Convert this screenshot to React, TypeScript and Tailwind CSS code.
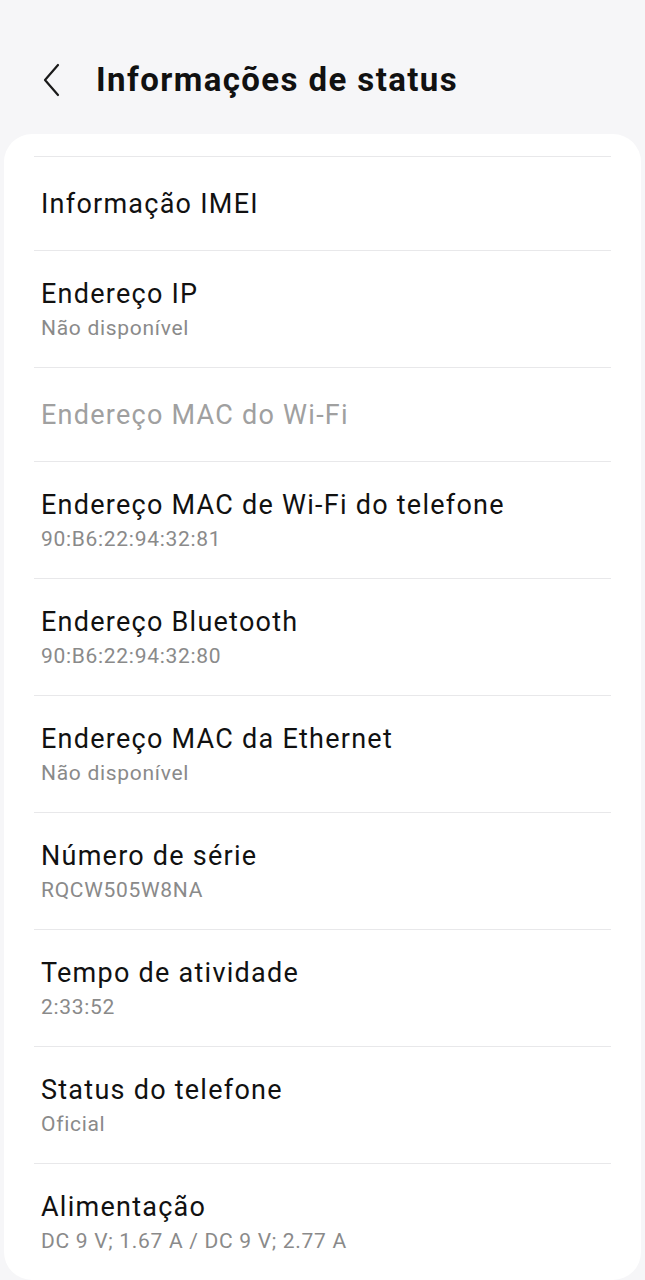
import React from "react";

type Item = { title: string; sub?: string; disabled?: boolean };

const items: Item[] = [
  { title: "Informação IMEI" },
  { title: "Endereço IP", sub: "Não disponível" },
  { title: "Endereço MAC do Wi-Fi", disabled: true },
  { title: "Endereço MAC de Wi-Fi do telefone", sub: "90:B6:22:94:32:81" },
  { title: "Endereço Bluetooth", sub: "90:B6:22:94:32:80" },
  { title: "Endereço MAC da Ethernet", sub: "Não disponível" },
  { title: "Número de série", sub: "RQCW505W8NA" },
  { title: "Tempo de atividade", sub: "2:33:52" },
  { title: "Status do telefone", sub: "Oficial" },
  { title: "Alimentação", sub: "DC 9 V; 1.67 A / DC 9 V; 2.77 A" },
];

export default function App() {
  return (
    <div
      className="w-[645px] h-[1280px] bg-[#f6f6f8] overflow-hidden flex flex-col"
      style={{ fontFamily: "Roboto, 'Noto Sans', sans-serif" }}
    >
      <div className="h-[134px] flex items-center pl-[42px] pt-[26px]">
        <svg width="20" height="34" viewBox="0 0 20 34" className="mr-[34px]">
          <path d="M16 2 L3 17 L16 32" fill="none" stroke="#1a1a1a" strokeWidth="2.2" strokeLinecap="round" strokeLinejoin="round" />
        </svg>
        <h1 className="text-[33px] font-bold text-[#111111] tracking-[1.4px]">Informações de status</h1>
      </div>
      <div className="mx-[4px] flex-1 bg-white rounded-[28px] pt-[22px] px-[30px]">
        {items.map((it, i) => (
          <div
            key={i}
            className={`border-t border-[#e8e8ea] px-[7px] flex flex-col justify-center ${it.sub ? "h-[117px]" : "h-[94px]"}`}
          >
            <div className={`text-[27px] leading-[32px] tracking-[1.25px] ${it.disabled ? "text-[#a0a0a0]" : "text-[#111111]"}`}>{it.title}</div>
            {it.sub && <div className="text-[21px] leading-[26px] mt-[5px] tracking-[0.7px] text-[#8a8a8a]">{it.sub}</div>}
          </div>
        ))}
      </div>
    </div>
  );
}
